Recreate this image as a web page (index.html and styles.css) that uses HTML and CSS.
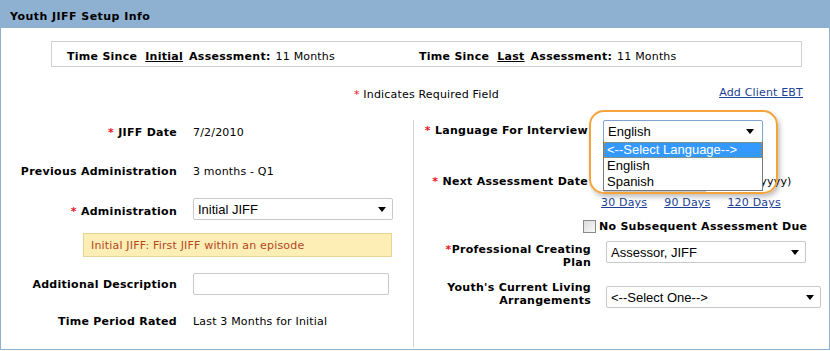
FILE: index.html
```html
<!DOCTYPE html>
<html>
<head>
<meta charset="utf-8">
<link rel="stylesheet" href="styles.css">
</head>
<body>
<div class="panel">
  <div class="header">Youth JIFF Setup Info</div>
  <div class="summary">
    <div class="sum-cell"><b class="w1">Time Since</b><b class="u w2">Initial</b><b class="w3">Assessment:</b><span>11 Months</span></div>
    <div class="sum-cell"><b class="w1">Time Since</b><b class="u w2">Last</b><b class="w3">Assessment:</b><span>11 Months</span></div>
  </div>
  <div class="req-row">
    <span class="req"><span class="star">*</span> Indicates Required Field</span>
    <a class="link ebt" href="#">Add Client EBT</a>
  </div>
  <div class="columns">
    <div class="col col-left">
      <div class="row r1"><div class="label"><span class="star">*</span> JIFF Date</div><div class="value">7/2/2010</div></div>
      <div class="row r2"><div class="label">Previous Administration</div><div class="value">3 months - Q1</div></div>
      <div class="row r3"><div class="label lower"><span class="star">*</span> Administration</div>
        <div class="select sel-admin"><span>Initial JIFF</span><svg width="8" height="5" viewBox="0 0 8 5"><path d="M0 0H8L4 5Z" fill="#000"/></svg></div></div>
      <div class="info">Initial JIFF: First JIFF within an episode</div>
      <div class="row r4"><div class="label">Additional Description</div><div class="input in-desc"></div></div>
      <div class="row r5"><div class="label">Time Period Rated</div><div class="value">Last 3 Months for Initial</div></div>
    </div>
    <div class="col col-right">
      <div class="rrow rr1"><div class="rlabel"><span class="star">*</span> Language For Interview</div>
        <div class="select sel-lang"><span>English</span><svg width="8" height="5" viewBox="0 0 8 5"><path d="M0 0H8L4 5Z" fill="#000"/></svg></div></div>
      <div class="rrow rr2"><div class="rlabel"><span class="star">*</span> Next Assessment Date</div>
        <div class="input in-date"></div><span class="fmt">(mm/dd/yyyy)</span></div>
      <div class="rrow links"><a class="link" href="#">30 Days</a><a class="link" href="#">90 Days</a><a class="link" href="#">120 Days</a></div>
      <div class="rrow chk-row"><span class="checkbox"></span><b>No Subsequent Assessment Due</b></div>
      <div class="rrow rr3"><div class="rlabel2"><span class="star">*</span>Professional Creating<br>Plan</div>
        <div class="select sel-prof"><span>Assessor, JIFF</span><svg width="8" height="5" viewBox="0 0 8 5"><path d="M0 0H8L4 5Z" fill="#000"/></svg></div></div>
      <div class="rrow rr4"><div class="rlabel2">Youth's Current Living<br>Arrangements</div>
        <div class="select sel-living"><span>&lt;--Select One--&gt;</span><svg width="8" height="5" viewBox="0 0 8 5"><path d="M0 0H8L4 5Z" fill="#000"/></svg></div></div>

      <div class="ring"></div>
      <div class="droplist">
        <div class="opt sel">&lt;--Select Language--&gt;</div>
        <div class="opt">English</div>
        <div class="opt">Spanish</div>
      </div>
    </div>
  </div>
</div>
</body>
</html>
```
FILE: styles.css
```css
* { box-sizing: border-box; }
body {
  margin: 0;
  font-family: "DejaVu Sans", Verdana, sans-serif;
  font-size: 11px;
  letter-spacing: 0.18px;
  color: #000;
  background: #fff;
}
b, .label, .rlabel, .rlabel2 { letter-spacing: 0.27px; }
.panel {
  width: 830px;
  height: 350px;
  border: 1px solid #8fb0cf;
  border-top: none;
  display: flex;
  flex-direction: column;
}
.header {
  height: 28px;
  margin: 0 -1px;
  background: #8fb1d1;
  font-weight: bold;
  letter-spacing: 0.45px;
  padding: 5px 0 0 10px;
  display: flex;
  align-items: center;
}
.summary {
  margin: 13px 0 0 50px;
  width: 751px;
  height: 26px;
  border: 1px solid #d0d0d0;
  display: grid;
  grid-template-columns: 352px 1fr;
  padding: 5px 0 0 15px;
  align-items: center;
}
.sum-cell { display: flex; align-items: baseline; white-space: nowrap; }
.sum-cell .w1 { margin-right: 8px; }
.sum-cell .w2 { margin-right: 6px; }
.sum-cell .w3 { margin-right: 5px; }
.u { text-decoration: underline; }
.star { color: #e8141e; }
.req-row {
  margin-top: 17px;
  height: 20px;
  display: flex;
  align-items: center;
}
.req { margin-left: 353px; }
.link { color: #1c3f94; text-decoration: underline; }
.ebt { margin-left: auto; margin-right: 26px; margin-top: -4px; }

.columns {
  margin-top: 16px;
  height: 227px;
  display: flex;
}
.col-left { width: 412px; }
.col-right {
  flex: 1;
  border-left: 1px solid #d3d3d3;
  position: relative;
}
.row { display: flex; align-items: center; }
.label {
  width: 176px;
  text-align: right;
  font-weight: bold;
  margin-right: 16px;
  white-space: nowrap;
}
.label.lower { margin-top: 5px; }
.r1 { margin-top: 2px; height: 20px; }
.r2 { margin-top: 19px; height: 20px; }
.r3 { margin-top: 17px; }
.r4 { margin-top: 16px; }
.r5 { margin-top: 16px; height: 20px; }

.select {
  height: 22px;
  border: 1px solid #c9c9c9;
  border-radius: 2px;
  background: #fff;
  display: flex;
  align-items: center;
  justify-content: space-between;
  padding: 0 4px 0 4px;
  font-family: "Liberation Sans", Arial, sans-serif;
  font-size: 13px;
  letter-spacing: 0;
}
.select svg { margin-right: 2px; }
.sel-admin { width: 200px; }
.input {
  height: 22px;
  border: 1px solid #c9c9c9;
  border-radius: 2px;
  background: #fff;
}
.in-desc { width: 196px; }
.info {
  margin: 13px 0 0 82px;
  width: 309px;
  height: 24px;
  background: #fdeeb6;
  border: 1px solid #e6d398;
  color: #b5461d;
  padding: 5px 0 0 7px;
}

.rrow { display: flex; align-items: flex-start; }
.rlabel {
  width: 174px;
  text-align: right;
  font-weight: bold;
  margin-right: 15px;
  white-space: nowrap;
}
.rlabel2 {
  width: 177px;
  text-align: right;
  font-weight: bold;
  margin-right: 15px;
  line-height: 13px;
  white-space: nowrap;
}
.rr1 { height: 22px; }
.rr1 .rlabel { margin-top: 4px; }
.sel-lang { width: 160px; border-color: #7fa3cf; padding-right: 6px; }
.rr2 { margin-top: 28px; height: 22px; align-items: center; }
.in-date { width: 104px; margin-right: 5px; }
.links { margin: 4px 0 0 187px; height: 14px; gap: 17px; }
.chk-row { margin: 9px 0 0 169px; height: 14px; align-items: center; }
.checkbox {
  width: 13px;
  height: 13px;
  border: 1px solid #8a8a8a;
  background: linear-gradient(135deg, #dcdcdc, #f7f7f7);
  margin-right: 3px;
}
.rr3 { margin-top: 8px; }
.rr3 .rlabel2 { margin-top: 2px; }
.sel-prof { width: 200px; }
.rr4 { margin-top: 12px; }
.rr4 .select { margin-top: 5px; }
.sel-living { width: 215px; }

.ring {
  position: absolute;
  left: 175px;
  top: -10px;
  width: 189px;
  height: 84px;
  border: 2px solid #f5a43a;
  border-radius: 15px;
  box-shadow: 2px 3px 5px rgba(0, 0, 0, 0.25);
}
.droplist {
  position: absolute;
  left: 189px;
  top: 21px;
  width: 160px;
  height: 50px;
  border: 1px solid #7a7a7a;
  border-top: none;
  background: #fff;
  font-family: "Liberation Sans", Arial, sans-serif;
  font-size: 13px;
  letter-spacing: 0;
  padding-top: 1px;
}
.opt { height: 16px; line-height: 15px; padding-left: 3px; }
.opt.sel {
  background: #3399ff;
  color: #fff;
  outline: 1px dotted #c98a2a;
  outline-offset: -1px;
}
```
